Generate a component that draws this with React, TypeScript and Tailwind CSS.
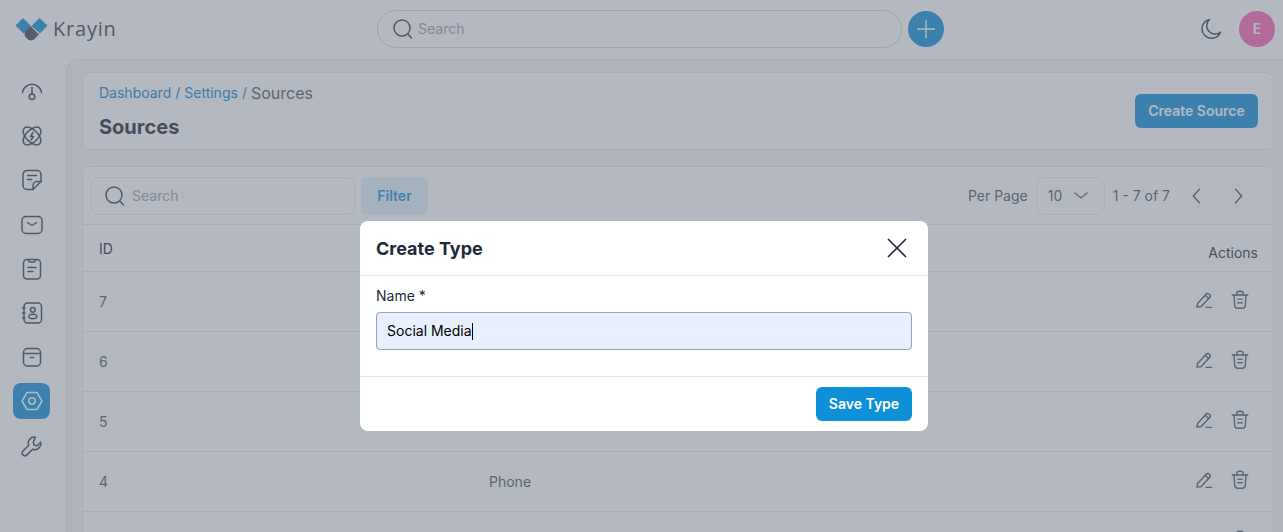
import type { ReactNode } from "react";

const rows = [
  { id: "7", name: "" },
  { id: "6", name: "" },
  { id: "5", name: "" },
  { id: "4", name: "Phone" },
  { id: "", name: "" },
];

function Icon({
  size = 24,
  strokeWidth = 1.5,
  className = "",
  children,
}: {
  size?: number;
  strokeWidth?: number;
  className?: string;
  children: ReactNode;
}) {
  return (
    <svg
      width={size}
      height={size}
      viewBox="0 0 24 24"
      fill="none"
      stroke="currentColor"
      strokeWidth={strokeWidth}
      strokeLinecap="round"
      strokeLinejoin="round"
      className={className}>
      {children}
    </svg>
  );
}

function SearchIcon() {
  return (
    <Icon className="text-gray-700">
      <circle cx="11" cy="11" r="8" />
      <path d="M17 17.2 20.5 21" />
    </Icon>
  );
}

function EditIcon() {
  return (
    <Icon size={20} strokeWidth={1.7}>
      <path d="M3.500 20.500l.8-4.200L14.600 5c.9-1 2.300-1 3.300-.2l.8.7c1 .9 1.100 2.300.2 3.300L8.700 19.800z" />
      <path d="M13.400 6.400l4.200 3.900" />
      <path d="M14.500 20.800h6.500" />
    </Icon>
  );
}

function TrashIcon() {
  return (
    <Icon size={22}>
      <path d="M3.500 6.500h17" />
      <path d="M8.500 6.500V5a2.500 2.500 0 0 1 2.500-2.500h2A2.500 2.500 0 0 1 15.500 5v1.500" />
      <path d="M5.500 6.500l.7 11.500a3.300 3.300 0 0 0 3.300 3h5a3.300 3.300 0 0 0 3.300-3l.7-11.500" />
      <path d="M9.500 11h5M9.500 15h5" />
    </Icon>
  );
}

const navIcons: ReactNode[] = [
  <>
    <path d="M2.500 12.500a9.600 9.600 0 0 1 19 0" />
    <path d="M12 7.500v6.500" />
    <circle cx="12" cy="16.800" r="2.800" />
  </>,
  <>
    <ellipse cx="12" cy="12" rx="11" ry="6" transform="rotate(45 12 12)" />
    <ellipse cx="12" cy="12" rx="11" ry="6" transform="rotate(-45 12 12)" />
    <path d="M13 8.500l-2.500 4h3l-2.500 3.500" />
  </>,
  <>
    <path d="M13 21.500H7a4 4 0 0 1-4-4v-11a4 4 0 0 1 4-4h10a4 4 0 0 1 4 4V13.500z" />
    <path d="M7.500 7.500h9M7.500 11.500h4" />
    <path d="M13 21.500v-4a4 4 0 0 1 4-4h4" />
  </>,
  <>
    <rect x="2" y="3.500" width="20" height="17" rx="4" />
    <path d="M7.500 9.500 12 12.500l4.500-3" />
  </>,
  <>
    <rect x="3.500" y="2.500" width="17" height="19.500" rx="3.500" />
    <path d="M8.500 2.800v.7a1.500 1.500 0 0 0 1.500 1.500h4a1.500 1.500 0 0 0 1.500-1.500v-.7" />
    <path d="M8 10.500h8M8 14.500h5" />
  </>,
  <>
    <rect x="4" y="2" width="17.500" height="20" rx="3.500" />
    <circle cx="12.800" cy="8.800" r="2.400" />
    <ellipse cx="12.800" cy="15.500" rx="4" ry="2.200" />
    <path d="M2.500 7h2.500M2.500 12h2.500M2.500 17h2.500" />
  </>,
  <>
    <rect x="3.500" y="3.500" width="17" height="17.500" rx="4" />
    <path d="M3.500 8.500h17" />
    <path d="M10.500 12.500h3" />
  </>,
  null,
  <>
    <path d="M15.500 3.200a6 6 0 0 0-6.800 8L3 17a2.700 2.700 0 0 0 3.900 3.900l5.800-5.700a6 6 0 0 0 8-6.900l-3.500 3.500-3.200-.7-.7-3.200z" />
  </>,
];

export default function App() {
  return (
    <div className="relative h-[532px] w-full overflow-hidden bg-white font-['Inter',sans-serif] text-sm text-gray-600">
      {/* Header */}
      <header className="flex h-[59px] items-center bg-white pr-2 pb-px pl-[15px]">
        <div className="flex w-[362px] items-center gap-[5px]">
          <svg width="33" height="23" viewBox="0 0 33 23">
            <path d="M0.500 7.500 8 0l8 8-7.500 7.500z" fill="#0e90d9" />
            <path d="M16.500 8 24.500 0 32.500 7.500 25 15.500z" fill="#0e90d9" />
            <path d="M12 12.500 16.500 8l8.500 8.500-4.500 4.500a5 5 0 0 1-7 0l-1.500-1.500a5 5 0 0 1 0-7z" fill="#3f4a5a" transform="translate(-1 0)" />
          </svg>
          <span className="font-['Open_Sans',sans-serif] text-[20px] leading-none font-medium tracking-[0.8px] text-gray-700">
            Krayin
          </span>
        </div>
        <div className="flex h-[38px] w-[525px] items-center gap-[3px] rounded-full border border-gray-300 bg-white pl-[13px]">
          <SearchIcon />
          <span className="text-gray-400">Search</span>
        </div>
        <button className="ml-[6px] flex h-9 w-9 items-center justify-center rounded-full bg-[#0e90d9] text-white">
          <svg width="24" height="24" viewBox="0 0 24 24" fill="none" stroke="currentColor" strokeWidth="1.4">
            <path d="M12 3v18M3 12h18" />
          </svg>
        </button>
        <div className="ml-auto flex items-center gap-4">
          <Icon size={24} className="text-gray-700">
            <path d="M10.500 2.500a9.500 9.500 0 1 0 11 12.500 8 8 0 0 1-11-12.500z" />
          </Icon>
          <div className="flex h-9 w-9 items-center justify-center rounded-full bg-pink-400 font-semibold text-white">E</div>
        </div>
      </header>

      <div className="flex">
        {/* Sidebar */}
        <aside className="flex w-[66px] shrink-0 flex-col items-center gap-[8.2px] pt-[15px] pr-[3px]">
          {navIcons.map((icon, i) =>
            icon ? (
              <div key={i} className="flex h-9 w-9 items-center justify-center text-gray-700">
                <Icon>{icon}</Icon>
              </div>
            ) : (
              <div key={i} className="flex h-9 w-[37px] items-center justify-center rounded-lg bg-[#0e90d9] text-white">
                <Icon>
                  <path d="M7 3.500h10l5 8.500-5 8.500H7L2 12z" />
                  <circle cx="12" cy="12" r="3.200" />
                </Icon>
              </div>
            )
          )}
        </aside>

        {/* Content */}
        <main className="flex-1 rounded-tl-[14px] border-t border-l border-gray-200 bg-gray-100 pt-[12px] pr-[9px] pl-[15px]">
          <section className="flex h-[78px] items-center justify-between rounded-lg border border-gray-200 bg-white pr-[15px] pl-4">
            <div className="pt-[2px]">
              <div className="flex gap-[4px] text-sm text-sky-600">
                <span>Dashboard</span>
                <span>/</span>
                <span>Settings</span>
                <span>/</span>
                <span className="text-base leading-5 text-gray-600">Sources</span>
              </div>
              <h1 className="mt-[10px] text-xl leading-7 font-bold text-gray-800">Sources</h1>
            </div>
            <button className="h-[34px] w-[123px] rounded-md bg-[#0e90d9] font-semibold text-white">Create Source</button>
          </section>

          <section className="mt-4 rounded-lg border border-gray-200 bg-white">
            <div className="flex h-[58px] items-center border-b border-gray-200 pr-[25px] pl-2">
              <div className="flex h-[38px] w-[264px] items-center gap-[5px] rounded-lg border border-gray-200 pl-[11px]">
                <SearchIcon />
                <span className="text-gray-400">Search</span>
              </div>
              <button className="ml-[6px] h-[38px] w-[67px] rounded-md bg-sky-100 font-semibold text-[#0e90d9]">Filter</button>
              <div className="ml-auto flex items-center text-gray-600">
                <span>Per Page</span>
                <div className="ml-2 flex h-[38px] w-[69px] items-center justify-between rounded-lg border border-gray-200 pr-[14px] pl-[11px]">
                  <span>10</span>
                  <Icon size={18} strokeWidth={1.7}>
                    <path d="M4 8l8 6.500L20 8" />
                  </Icon>
                </div>
                <span className="ml-2">1 - 7 of 7</span>
                <div className="ml-[17px] flex gap-[21px] text-gray-600">
                  <Icon size={20} strokeWidth={1.7}>
                    <path d="M15 4l-7.500 8 7.500 8" />
                  </Icon>
                  <Icon size={20} strokeWidth={1.7}>
                    <path d="M9 4l7.500 8L9 20" />
                  </Icon>
                </div>
              </div>
            </div>

            <div className="flex h-[47px] justify-between border-b border-gray-200 pr-[15px] pl-4 text-gray-800">
              <span className="pt-[14px]">ID</span>
              <span className="pt-[18px]">Actions</span>
            </div>

            {rows.map((row, i) => (
              <div key={i} className="flex h-[60px] items-center border-b border-gray-200 pr-[19px] pl-4">
                <span className="w-[390px]">{row.id}</span>
                <span>{row.name}</span>
                <div className="ml-auto mt-[-4px] flex items-center gap-2 text-gray-600">
                  <div className="flex h-7 w-7 items-center justify-center">
                    <EditIcon />
                  </div>
                  <div className="flex h-7 w-7 items-center justify-center">
                    <TrashIcon />
                  </div>
                </div>
              </div>
            ))}
          </section>
        </main>
      </div>

      {/* Modal */}
      <div className="absolute inset-0 flex justify-center bg-gray-500/50 pt-[221px] pl-[5px]">
        <div className="h-[210px] w-[568px] rounded-lg bg-white text-gray-800">
          <div className="flex h-[55px] items-center justify-between border-b border-gray-200 pt-[2px] pr-[21px] pl-4">
            <h2 className="text-lg font-bold text-gray-800">Create Type</h2>
            <svg width="20" height="20" viewBox="0 0 20 20" fill="none" stroke="currentColor" strokeWidth="1.6" className="mt-[-3px]">
              <path d="M1 1l18 18M19 1 1 19" />
            </svg>
          </div>
          <div className="h-[101px] border-b border-gray-200 px-4 pt-[10px]">
            <label className="block text-sm leading-5 text-gray-800">Name *</label>
            <div className="mt-[6px] flex h-[38px] items-center rounded-[4px] border border-gray-400 bg-[#e8f0fe] px-[10px] text-black">
              Social Media
              <span className="h-[17px] w-px bg-black" />
            </div>
          </div>
          <div className="flex justify-end px-4 pt-[10px]">
            <button className="h-[34px] w-[96px] rounded-md bg-[#0e90d9] font-semibold text-white">Save Type</button>
          </div>
        </div>
      </div>
    </div>
  );
}
